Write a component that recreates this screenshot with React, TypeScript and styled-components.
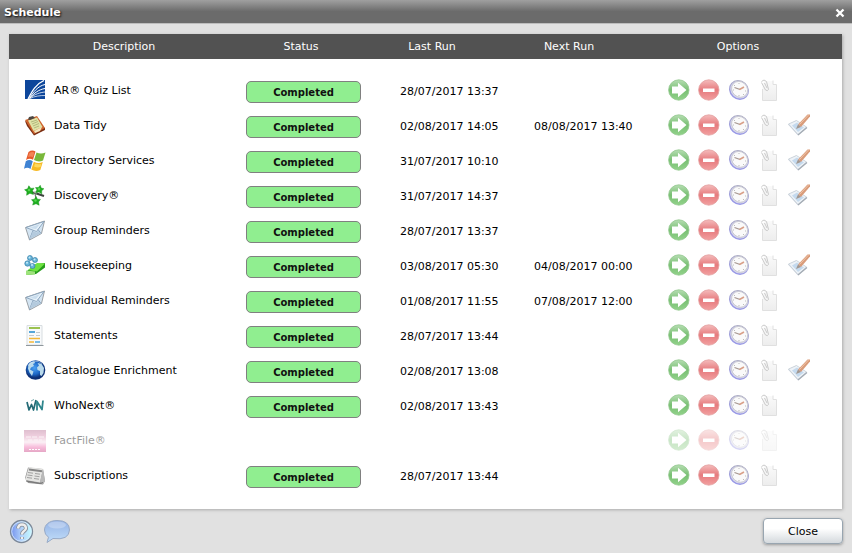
import React from "react";
import styled, { createGlobalStyle } from "styled-components";

const GlobalStyle = createGlobalStyle`
  * { box-sizing: border-box; }
  body {
    margin: 0;
    background: #e1e1e1;
    color: #000;
    font: 11px/14px Verdana, "DejaVu Sans", sans-serif;
  }
  button { font: inherit; color: inherit; }
`;

const Dialog = styled.section`
  display: flex;
  flex-direction: column;
  min-height: 100vh;
`;

const TitleBar = styled.header`
  display: flex;
  align-items: center;
  justify-content: space-between;
  height: 24px;
  padding: 2px 7px 0 4px;
  color: #fff;
  background: linear-gradient(#a0a0a0, #6b6b6b 50%, #6b6b6b);
  border-bottom: 1px solid #bdbdbd;
`;

const Title = styled.h1`
  margin: 0;
  font-size: 11px;
  font-weight: bold;
  text-shadow: 1px 1px 2px #000;
`;

const IconButton = styled.button`
  display: flex;
  padding: 0;
  border: 0;
  background: none;
  cursor: pointer;
`;

const Panel = styled.main`
  margin: 10px 10px 0 9px;
  padding-bottom: 16px;
  background: #fff;
  box-shadow: 1px 1px 3px #aaa;
`;

const Table = styled.table`
  width: 100%;
  table-layout: fixed;
  border-collapse: collapse;
`;

const Column = styled.col<{ $width?: number }>`
  width: ${(p) => (p.$width ? `${p.$width}px` : "auto")};
`;

const HeadCell = styled.th`
  height: 25px;
  padding: 0;
  color: #fff;
  background: #525252;
  font-weight: normal;
  &:last-child { padding-right: 3px; }
`;

const Body = styled.tbody`
  &::before {
    content: "";
    display: table-row;
    height: 14px;
  }
`;

const Row = styled.tr<{ $faded: boolean }>`
  height: 35px;
  opacity: ${(p) => (p.$faded ? 0.4 : 1)};
`;

const Cell = styled.td<{ $indent: number }>`
  padding: 2px 0 0 ${(p) => p.$indent}px;
  white-space: nowrap;
`;

const NameCell = styled(Cell)`
  padding-top: 0;
`;

const OptionsCell = styled(Cell)`
  padding-top: 0;
  padding-bottom: 2px;
`;

const Description = styled.div`
  display: flex;
  align-items: center;
  gap: 8px;
`;

const Status = styled.div`
  width: 115px;
  height: 22px;
  border: 1px solid #808080;
  border-radius: 5px;
  background: #90ee90;
  color: #111;
  font-size: 10px;
  font-weight: bold;
  line-height: 21px;
  text-align: center;
`;

const Options = styled.div`
  display: flex;
  gap: 8px;
`;

const Footer = styled.footer`
  display: flex;
  align-items: center;
  gap: 9px;
  padding: 9px;
`;

const CloseButton = styled.button`
  width: 80px;
  height: 26px;
  margin-left: auto;
  padding: 2px 0 0;
  border: 1px solid #98a5b0;
  border-radius: 4px;
  background: linear-gradient(#fff 40%, #d4d9dd);
  box-shadow: 0 1px 3px #999;
`;

const Svg = ({ children }: { children: React.ReactNode }) => (
  <svg width="22" height="22" viewBox="0 0 22 22" aria-hidden="true">{children}</svg>
);

const star = "M0-5L1.700-2 5-1.800 2.800 1 3.500 4.700 0 3-3.700 4.500-2.800 1-5-1.500-1.700-2z";

const rowIcons: Record<string, React.ReactNode> = {
  quiz: (
    <Svg>
      <path d="M1 0h20v19H1z" fill="#0d469b" />
      <g fill="none" stroke="#fff">
        <path d="M4 19C8 11 12 4 20 .500" strokeWidth="1.300" />
        <path d="M5 19C9 12 14 6 21 4.500" />
        <path d="M6 18c4-5 9-8.500 15-9.500" />
        <path d="M6 18c5-4 10-5.500 15-6" strokeWidth=".8" />
        <path d="M6 18.500c5-2.500 10-3 15-3" strokeWidth=".7" />
      </g>
    </Svg>
  ),
  tidy: (
    <Svg>
      <path d="M1 6l2 5 7 9.500 11-5.500v-2z" fill="#7a2f13" />
      <path d="M1 5l12-4 8 12-11 6z" fill="#cf642e" />
      <path d="M4 5.500l9-3 5.500 9.500L9.500 16z" fill="#dfe2a6" />
      <path d="M4 4.500l1-2.500 4-1 2 2-5 2z" fill="#4c4842" />
      <path d="M7 7l6-2M8 9l6-2.500M9 11l6-2.500M10 13l5-2" stroke="#a6ad74" strokeWidth=".8" />
      <path d="M10 16l8-4-2 4-5 2z" fill="#f2e7bd" />
    </Svg>
  ),
  windows: (
    <Svg>
      <path d="M4.500 2Q8-.5 11.500 1.500L9 9.700Q5.500 7.500 2 10z" fill="#e65a2a" />
      <path d="M12.500 2.500q4.500 2 9 0l-2.500 8q-4.500 2-9-.5z" fill="#79b83a" />
      <path d="M1.800 11.200q3.500-2.500 7 0L6.500 19Q3.500 16.800 0 18.800z" fill="#3f83d3" />
      <path d="M9.800 11.700q4.500 2.500 9 .3l-2.500 8q-4.500 2.300-9-.4z" fill="#f7ba25" />
      <path d="M5.300 3q2.500-1.600 5-.5L9 7Q6.500 6 4 7z" fill="#f79668" opacity=".7" />
      <path d="M11 13.500q3 1.500 6.500.2l-1 3.300q-3 1-6.500-.5z" fill="#ffe16b" opacity=".8" />
    </Svg>
  ),
  stars: (
    <Svg>
      <path d="M7 7l4 1 9 3" stroke="#3d443d" strokeWidth="2" fill="none" />
      <path d="M11 8l4-4M11 8l1 6" stroke="#777f76" strokeWidth="1.300" />
      <path d="M9 6.500l4 1.500" stroke="#d0d5cd" strokeWidth="1" />
      <g fill="#1eae20" stroke="#16921a" strokeWidth=".5">
        <path d={star} transform="translate(5.500 5.500) rotate(-8) scale(.95)" />
        <path d={star} transform="translate(15.500 4.500) rotate(10) scale(.85)" />
        <path d={star} transform="translate(12 16) scale(.9)" />
      </g>
      <g fill="#56d64e"><circle cx="5" cy="5" r="1.300" /><circle cx="15" cy="4" r="1.300" /><circle cx="11.500" cy="15.500" r="1.200" /></g>
    </Svg>
  ),
  envelope: (
    <Svg>
      <path d="M1.500 7.500L20.500 1 17.500 13.500 5.500 20z" fill="#d3e4f2" stroke="#868b91" strokeWidth=".8" />
      <path d="M2 7.500L20 1.500 12.500 11.500z" fill="#e8f3fb" stroke="#86a0ba" strokeWidth=".9" />
      <path d="M5.500 19.500L9 10.500M17 13.500l-3-4" stroke="#86a0ba" />
      <path d="M5.500 19L9 11l3.500 1.500 1.500-2 3 3z" fill="#b4cadd" />
      <path d="M5 8l11-4-4 5z" fill="#bcd3e7" opacity=".7" />
    </Svg>
  ),
  housekeeping: (
    <Svg>
      <path d="M3 16l9-7 9-1v4.500L12 19l-9 1z" fill="#269d1b" />
      <path d="M4 15l9-7 8 .5-8 8z" fill="#6ee340" />
      <path d="M2 15.500l9 1v3L2 20z" fill="#9ee37c" />
      <g fill="#68b4d8" stroke="#337ea8" strokeWidth=".7">
        <circle cx="6" cy="3" r="2.500" /><circle cx="11" cy="5" r="2.500" /><circle cx="3.500" cy="8.500" r="2.700" /><circle cx="8.500" cy="11" r="2.500" />
      </g>
      <g fill="#c2eafa"><circle cx="5.500" cy="2.500" r="1" /><circle cx="10.500" cy="4.500" r="1" /><circle cx="3" cy="7.700" r="1" /><circle cx="8" cy="10" r="1" /></g>
    </Svg>
  ),
  statements: (
    <Svg>
      <path d="M3 .500h15v19.500H3z" fill="#f8fafb" stroke="#d8dde0" />
      <path d="M2 20.500h17.500" stroke="#8f979c" />
      <path d="M5 3h11" stroke="#9bc250" strokeWidth="2" />
      <path d="M5 7h6" stroke="#55a6d9" strokeWidth="2" />
      <path d="M12 7.500h4M5 10.500h5M12 10.500h4" stroke="#c3cace" />
      <path d="M5 13.500h11M5 17h5" stroke="#f3b838" strokeWidth="1.600" />
      <path d="M11 17h5" stroke="#5eaee0" strokeWidth="1.600" />
    </Svg>
  ),
  globe: (
    <Svg>
      <defs><radialGradient id="globe" cx=".45" cy=".4"><stop stopColor="#4ba1f4" /><stop offset=".65" stopColor="#1c66c4" /><stop offset="1" stopColor="#0d2f74" /></radialGradient></defs>
      <circle cx="11.500" cy="10" r="9.800" fill="url(#globe)" />
      <path d="M4.500 4.500q2-3 6-3l.5 1.500-2 1 1 2-3 1.500-1 2 3.500 2-1.500 4.500-2.500-3.500-1.500-4zM13.500 3l4 1 2.500 4-.5 5-2 3-1.500-1 0-4-2.500-1-.5-2.500 2-2z" fill="#b9daec" />
      <path d="M4 6a8 7 0 0 1 14-2" fill="none" stroke="#fff" opacity=".4" />
    </Svg>
  ),
  who: (
    <Svg>
      <path d="M3 7l2 8 2.500-5.500 2 5.500 2.500-10" fill="none" stroke="#246b76" strokeWidth="1.700" strokeLinejoin="round" />
      <path d="M13 15.500V6.500l5 8L19 5.500" fill="none" stroke="#2e858c" strokeWidth="1.800" strokeLinejoin="round" />
      <path d="M7 6l3-1.500" stroke="#79adb0" />
    </Svg>
  ),
  fact: (
    <Svg>
      <defs><linearGradient id="fact" x2="0" y2="1"><stop stopColor="#b06088" /><stop offset=".3" stopColor="#d98bb1" /><stop offset=".55" stopColor="#f8dce9" /><stop offset=".78" stopColor="#ed5aa6" /><stop offset="1" stopColor="#c02672" /></linearGradient></defs>
      <path d="M0 0h22v22H0z" fill="url(#fact)" />
      <path d="M2 7h5m1 0h5m2 0h5M4 10h4m2 0h4m1 0h3" stroke="#f8e4ee" strokeWidth="1.200" />
      <path d="M5 19.500h12" stroke="#fff" strokeWidth="1.200" strokeDasharray="2 1" />
    </Svg>
  ),
  news: (
    <Svg>
      <path d="M4 2.500L19 4l2 12-2 3.500L4 18 1 13z" fill="#969696" />
      <path d="M5 2L19 4l-3 13.500L1 15z" fill="#e5e5e3" />
      <path d="M19 4l2 12-2 3-3-2z" fill="#b9b9b9" />
      <path d="M5 4.500l13 1.800" stroke="#868686" strokeWidth="2" />
      <path d="M4 7.500l5 .7M11 8.500l5 .7M3.500 10l5 .7M10.500 11l5 .7M3 12.500l5 .7M10 13.500l5 .7" stroke="#999" strokeWidth=".9" />
      <path d="M2 16l14 2.500 3-1" fill="none" stroke="#777" />
    </Svg>
  ),
};

const optionIcons: Record<string, React.ReactNode> = {
  "Run now": (
    <Svg>
      <defs><linearGradient id="run" x2="0" y2="1"><stop stopColor="#b7deb3" /><stop offset=".5" stopColor="#78bf73" /><stop offset="1" stopColor="#92d28a" /></linearGradient></defs>
      <circle cx="10.800" cy="11" r="10.200" fill="url(#run)" stroke="#92c88d" strokeWidth=".8" />
      <path d="M4 7.500h6V3.800l8.500 7.200-8.500 7.200v-3.700H4z" fill="#fff" />
    </Svg>
  ),
  Stop: (
    <Svg>
      <defs><linearGradient id="stop" x2="0" y2="1"><stop stopColor="#f4bcbc" /><stop offset=".5" stopColor="#e67a7d" /><stop offset="1" stopColor="#f2a0a0" /></linearGradient></defs>
      <circle cx="10.800" cy="11" r="10.200" fill="url(#stop)" stroke="#e3a0a0" strokeWidth=".8" />
      <path d="M5 9.500h11.500v3.500H5z" fill="#fff" />
    </Svg>
  ),
  Schedule: (
    <Svg>
      <defs><linearGradient id="clock" x1=".1" x2=".6" y2="1"><stop stopColor="#a9a9b8" /><stop offset=".5" stopColor="#a6a6d4" /><stop offset="1" stopColor="#9696e8" /></linearGradient></defs>
      <ellipse cx="11" cy="11" rx="10.400" ry="9.500" fill="url(#clock)" transform="rotate(42 11 11)" />
      <ellipse cx="11" cy="10.600" rx="9.400" ry="8.400" fill="#d8d8ec" transform="rotate(42 11 11)" />
      <ellipse cx="11" cy="10.100" rx="8.400" ry="7.500" fill="#fafafa" stroke="#bdbdc6" strokeWidth=".7" transform="rotate(42 11 11)" />
      <path d="M6.500 8.500l5.500 2" stroke="#a69791" strokeWidth="1.300" />
      <path d="M11.500 10.500l4.500-2.500" stroke="#d9a088" strokeWidth="1.600" />
      <path d="M11 4v1M17 12h1M11 16v1M5 11h1M6 6l1 1M15 15l1 1" stroke="#bbb" />
    </Svg>
  ),
  Log: (
    <Svg>
      <defs><linearGradient id="log" x2="0" y2="1"><stop stopColor="#fafafa" /><stop offset="1" stopColor="#ededed" /></linearGradient></defs>
      <path d="M6 2h9v3.500h3.500v16H4.500V8z" fill="url(#log)" />
      <path d="M15 1.500v4h3.500v16h-14V10" fill="none" stroke="#e0e0e0" />
      <path d="M3.500 3.500l4 7.500q2 1.500 3-.5L8.500 2.500Q6-.5 3.500 2.500M6.500 4l2.500 5" fill="none" stroke="#cacaca" />
    </Svg>
  ),
  Edit: (
    <Svg>
      <path d="M0 10.500L8 6.500l11 7-9 8z" fill="#cfd6df" />
      <path d="M.5 10l8-3.500 10 6.500L10 20.500z" fill="#eef3f8" stroke="#c0c8d1" strokeWidth=".7" />
      <path d="M4 11.500l5-3 7 5L10 18z" fill="#c5daee" />
      <path d="M10 21l9-7.500" stroke="#a4abb4" strokeWidth="1.200" />
      <path d="M10 10.500L19.500.500H22v2L13 13z" fill="#d99c7a" />
      <path d="M11.500 10.500l9-9.500" stroke="#f0c4a8" />
      <path d="M8 15l2-4.500L13 13z" fill="#a19791" />
    </Svg>
  ),
};

interface Task {
  icon: string;
  name: string;
  last?: string;
  next?: string;
  editable?: boolean;
}

const tasks: Task[] = [
  { icon: "quiz", name: "AR® Quiz List", last: "28/07/2017 13:37" },
  { icon: "tidy", name: "Data Tidy", last: "02/08/2017 14:05", next: "08/08/2017 13:40", editable: true },
  { icon: "windows", name: "Directory Services", last: "31/07/2017 10:10", editable: true },
  { icon: "stars", name: "Discovery®", last: "31/07/2017 14:37", editable: true },
  { icon: "envelope", name: "Group Reminders", last: "28/07/2017 13:37" },
  { icon: "housekeeping", name: "Housekeeping", last: "03/08/2017 05:30", next: "04/08/2017 00:00", editable: true },
  { icon: "envelope", name: "Individual Reminders", last: "01/08/2017 11:55", next: "07/08/2017 12:00" },
  { icon: "statements", name: "Statements", last: "28/07/2017 13:44" },
  { icon: "globe", name: "Catalogue Enrichment", last: "02/08/2017 13:08", editable: true },
  { icon: "who", name: "WhoNext®", last: "02/08/2017 13:43" },
  { icon: "fact", name: "FactFile®" },
  { icon: "news", name: "Subscriptions", last: "28/07/2017 13:44" },
];

export default function App() {
  return (
    <Dialog aria-labelledby="title">
      <GlobalStyle />
      <TitleBar>
        <Title id="title">Schedule</Title>
        <IconButton aria-label="Close window">
          <svg width="10" height="10" viewBox="0 0 10 10" aria-hidden="true">
            <path d="M1.500 1.500l7 7m0-7l-7 7" stroke="#fff" strokeWidth="2.300" />
          </svg>
        </IconButton>
      </TitleBar>
      <Panel>
        <Table>
          <colgroup>
            <Column $width={230} />
            <Column $width={124} />
            <Column $width={138} />
            <Column $width={136} />
            <Column />
          </colgroup>
          <thead>
            <tr>
              {["Description", "Status", "Last Run", "Next Run", "Options"].map((h) => <HeadCell key={h} scope="col">{h}</HeadCell>)}
            </tr>
          </thead>
          <Body>
            {tasks.map((task) => (
              <Row key={task.name} $faded={!task.last}>
                <NameCell $indent={15}>
                  <Description>{rowIcons[task.icon]}<span>{task.name}</span></Description>
                </NameCell>
                <Cell $indent={7}>{task.last && <Status>Completed</Status>}</Cell>
                <Cell $indent={37}>{task.last}</Cell>
                <Cell $indent={33}>{task.next}</Cell>
                <OptionsCell $indent={31}>
                  <Options>
                    {Object.entries(optionIcons)
                      .filter(([label]) => label !== "Edit" || task.editable)
                      .map(([label, icon]) => (
                        <IconButton key={label} aria-label={`${label}: ${task.name}`}>{icon}</IconButton>
                      ))}
                  </Options>
                </OptionsCell>
              </Row>
            ))}
          </Body>
        </Table>
      </Panel>
      <Footer>
        <IconButton aria-label="Help">
          <svg width="25" height="25" viewBox="0 0 25 25" aria-hidden="true">
            <defs><linearGradient id="help"><stop stopColor="#718fed" /><stop offset=".55" stopColor="#b5d7fb" /><stop offset="1" stopColor="#c2fcff" /></linearGradient></defs>
            <circle cx="12.500" cy="12.500" r="11" fill="url(#help)" stroke="#7d8999" strokeWidth="1.300" />
            <circle cx="12.500" cy="12.500" r="9.800" fill="none" stroke="#dcefff" strokeWidth=".8" />
            <path d="M9 9.500q.5-4 4-4t4 3.500q0 2-2.500 3.500-1.500 1-1.500 3M13 18v2" fill="none" stroke="#858c96" strokeWidth="4" />
            <path d="M9 9.500q.5-4 4-4t4 3.500q0 2-2.500 3.500-1.500 1-1.500 3M13 18v2" fill="none" stroke="#eee" strokeWidth="2.400" />
          </svg>
        </IconButton>
        <IconButton aria-label="Messages">
          <svg width="28" height="25" viewBox="0 0 28 25" aria-hidden="true">
            <defs><linearGradient id="chat" x2="0" y2="1"><stop stopColor="#94b2e5" /><stop offset="1" stopColor="#c1defa" /></linearGradient></defs>
            <path d="M14 1.500C6 1.500 1.500 6 1.500 11q0 4.500 4 7.200L4 23.500l6-4q16 2 16.500-8.500 0-9.500-12.500-9.500z" fill="url(#chat)" stroke="#98aac6" />
            <ellipse cx="14" cy="6" rx="9" ry="3.500" fill="#fff" opacity=".28" />
          </svg>
        </IconButton>
        <CloseButton>Close</CloseButton>
      </Footer>
    </Dialog>
  );
}
